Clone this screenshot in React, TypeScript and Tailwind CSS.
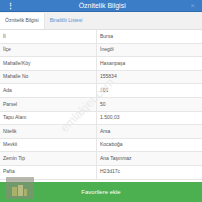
import React from "react";

const rows: [string, string][] = [
  ["İl", "Bursa"],
  ["İlçe", "İnegöl"],
  ["Mahalle/Köy", "Hasanpaşa"],
  ["Mahalle No", "155834"],
  ["Ada", "101"],
  ["Parsel", "50"],
  ["Tapu Alanı", "1.500,03"],
  ["Nitelik", "Arsa"],
  ["Mevkii", "Kocaboğa"],
  ["Zemin Tip", "Ana Taşınmaz"],
  ["Pafta", "H23d17c"],
];

export default function App() {
  return (
    <div
      className="relative w-[202px] h-[202px] overflow-hidden bg-white flex flex-col"
      style={{ fontFamily: '"Liberation Sans", Arial, sans-serif' }}
    >
      <div className="h-[12px] bg-[#3b7dc6] flex items-center justify-between px-[7px] text-white border-b border-[#2f6aab]">
        <span className="text-[7px] font-bold leading-none">⋮</span>
        <span className="text-[7px] leading-none">Öznitelik Bilgisi</span>
        <span className="text-[8px] leading-none text-[#7fa6d6]">×</span>
      </div>
      <div className="h-[18px] bg-[#f1f1f1] flex items-end border-b border-[#e0e0e0]">
        <div className="h-[16px] bg-white px-[5px] flex items-center text-[5px] text-[#555] border-r border-[#e5e5e5]">
          Öznitelik Bilgisi
        </div>
        <div className="h-[16px] px-[5px] flex items-center text-[5px] text-[#5b8fd0]">
          Binalitlit Listesi
        </div>
      </div>
      <div className="flex flex-col">
        {rows.map(([k, v], i) => (
          <div
            key={k}
            className={`h-[13.6px] flex border-b border-[#e6e6e6] text-[5px] text-[#555] ${
              i % 2 === 0 ? "bg-white" : "bg-[#f9f9f9]"
            }`}
          >
            <div className="w-[97px] border-r border-[#e6e6e6] flex items-center pl-[3px]">{k}</div>
            <div className="flex-1 flex items-center pl-[3px]">{v}</div>
          </div>
        ))}
      </div>
      <div className="absolute left-0 right-0 bottom-0 h-[20px] bg-[#4caf50] flex items-center justify-center text-white text-[6px]">
        Favorilere ekle
      </div>
      <div className="absolute left-[6px] top-[177px] w-[28px] h-[22px] bg-[#8a8a7a]/60 flex items-end justify-center pb-[2px]">
        <svg width="18" height="14" viewBox="0 0 18 14">
          <rect x="1" y="4" width="5" height="9" fill="#a8b06a" />
          <rect x="7" y="2" width="5" height="11" fill="#c9c68a" opacity="0.8" />
          <rect x="13" y="6" width="3" height="7" fill="#a8b06a" />
        </svg>
      </div>
      <div className="absolute left-[52px] top-[96px] text-[12px] text-[#ebebeb] -rotate-45 pointer-events-none">
        emlakjet.com
      </div>
    </div>
  );
}
